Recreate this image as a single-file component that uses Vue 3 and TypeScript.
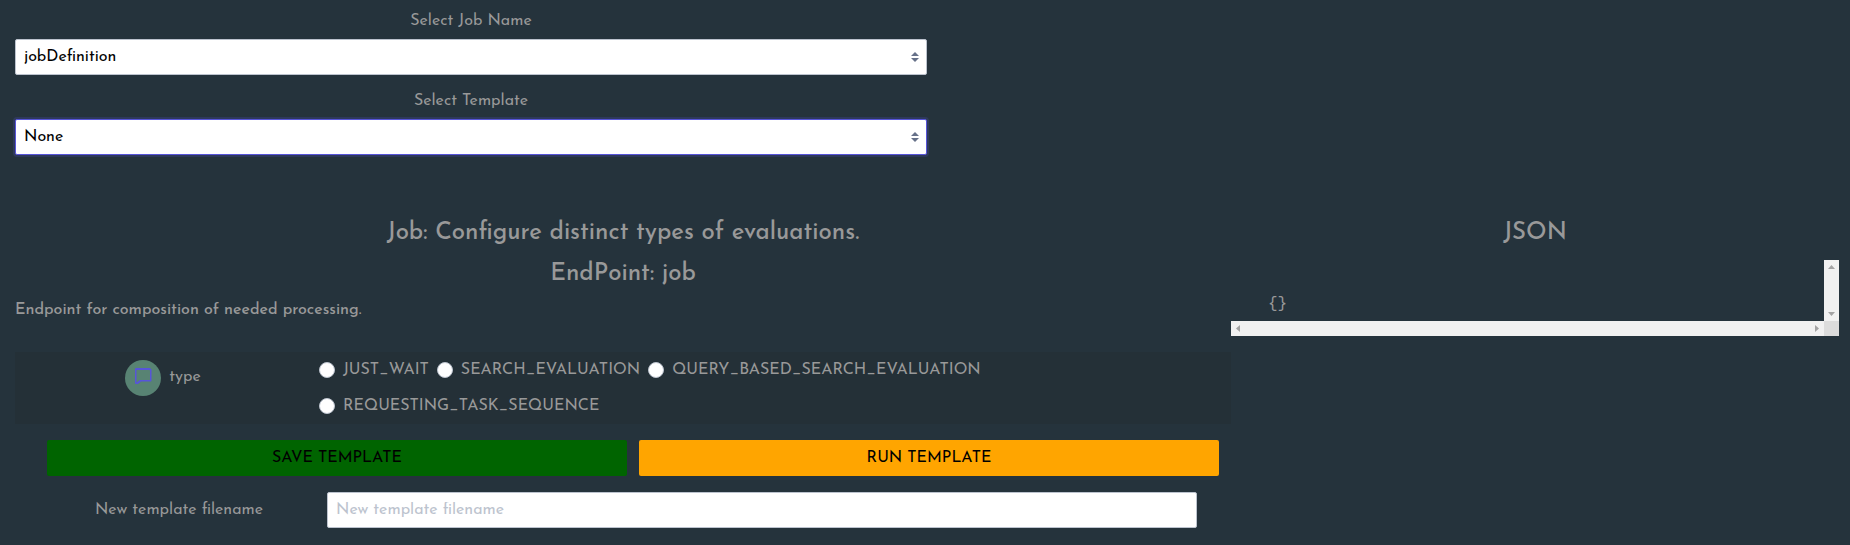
<script setup lang="ts">
import { ref } from 'vue'

const jobName = ref('jobDefinition')
const template = ref('None')
const evaluationType = ref('')
const filename = ref('')
const json = ref('{}')

const jobNames: string[] = ['jobDefinition']
const templates: string[] = ['None']
const evaluationTypes: string[] = [
  'JUST_WAIT',
  'SEARCH_EVALUATION',
  'QUERY_BASED_SEARCH_EVALUATION',
  'REQUESTING_TASK_SEQUENCE',
]
</script>

<template>
  <main class="page">
    <section class="selectors">
      <label class="field-label" for="job-name">Select Job Name</label>
      <select id="job-name" v-model="jobName" class="control select">
        <option v-for="name in jobNames" :key="name">{{ name }}</option>
      </select>
      <label class="field-label" for="template">Select Template</label>
      <select id="template" v-model="template" class="control select active">
        <option v-for="name in templates" :key="name">{{ name }}</option>
      </select>
    </section>

    <div class="columns">
      <section class="job">
        <h3>Job: Configure distinct types of evaluations.</h3>
        <h3>EndPoint: job</h3>
        <p class="description">Endpoint for composition of needed processing.</p>

        <div class="type-row" role="radiogroup" aria-labelledby="type-label">
          <div class="type-name">
            <button class="info" type="button" aria-label="Show description">
              <svg viewBox="0 0 18 20" width="18" height="20" aria-hidden="true">
                <path
                  d="M2 0H16L17.5 1.5V12.5L17 13.5H7L4 16H2Q1 16 1 15V1Q1 0 2 0ZM2.5 2V14.5L6 12H16V2.5L15.5 2Z"
                  fill="#5755d9"
                  fill-rule="evenodd"
                />
              </svg>
            </button>
            <span id="type-label">type</span>
          </div>
          <div class="options">
            <label v-for="name in evaluationTypes" :key="name" class="option">
              <input v-model="evaluationType" type="radio" name="type" :value="name" />
              <span>{{ name }}</span>
            </label>
          </div>
        </div>

        <div class="actions">
          <button class="button save" type="button">SAVE TEMPLATE</button>
          <button class="button run" type="button">RUN TEMPLATE</button>
        </div>

        <div class="filename-row">
          <label for="filename">New template filename</label>
          <input id="filename" v-model="filename" class="control" type="text" placeholder="New template filename" />
        </div>
      </section>

      <section class="json">
        <h3>JSON</h3>
        <div class="viewer">
          <pre>{{ json }}</pre>
          <div class="bar vertical">
            <svg viewBox="0 0 7 4" width="7" height="4"><path d="M0 4L3.5 0L7 4Z" /></svg>
            <svg viewBox="0 0 7 4" width="7" height="4"><path d="M0 0L3.5 4L7 0Z" /></svg>
          </div>
          <div class="bar horizontal">
            <svg viewBox="0 0 4 7" width="4" height="7"><path d="M4 0L0 3.5L4 7Z" /></svg>
            <svg viewBox="0 0 4 7" width="4" height="7"><path d="M0 0L4 3.5L0 7Z" /></svg>
          </div>
          <div class="corner"></div>
        </div>
      </section>
    </div>
  </main>
</template>

<style>
body {
  background: #25333c;
}
</style>

<style scoped>
* {
  box-sizing: border-box;
}

.page {
  padding: 9px 11px 16px 15px;
  color: #999;
  font: 16px/24px "Josefin Sans", Lato, sans-serif;
}

.selectors {
  width: 50%;
  display: flex;
  flex-direction: column;
}

.field-label {
  text-align: center;
  margin-bottom: 6px;
}

.control {
  width: 100%;
  height: 36px;
  padding: 4px 8px;
  border: 1px solid #bcc3ce;
  border-radius: 2px;
  background: #fff;
  color: #000;
  font: inherit;
  outline: none;
}

.control::placeholder {
  color: #bcc3ce;
  opacity: 1;
}

.select {
  appearance: none;
  margin-bottom: 14px;
  background: #fff url("data:image/svg+xml;charset=utf8,%3Csvg xmlns='http://www.w3.org/2000/svg' viewBox='0 0 4 5'%3E%3Cpath fill='%23667189' d='M2 0L0 2h4zm0 5L0 3h4z'/%3E%3C/svg%3E") no-repeat right 7px center / 8px 10px;
}

.active,
.control:focus {
  border-color: #5755d9;
  box-shadow: 0 0 0 2px rgba(87, 85, 217, 0.2);
}

.columns {
  display: grid;
  grid-template-columns: 2fr 1fr;
  margin-top: 44px;
}

h3 {
  margin: 0;
  font-size: 24px;
  line-height: 41px;
  font-weight: 500;
  text-align: center;
}

.description {
  margin: 3px 0 30px;
  font-weight: 500;
}

.type-row {
  display: grid;
  grid-template-columns: 1fr 3fr;
  background: #243037;
}

.type-name {
  display: flex;
  align-items: center;
  align-self: start;
  justify-content: center;
  gap: 8px;
  padding: 8px 8px 0 0;
}

.type-name span {
  padding-bottom: 2px;
}

.info {
  display: flex;
  align-items: center;
  justify-content: center;
  width: 36px;
  height: 36px;
  padding: 0;
  border: 0;
  border-radius: 50%;
  background: #588373;
}

.options {
  display: flex;
  flex-wrap: wrap;
  column-gap: 8px;
}

.option {
  display: flex;
  align-items: center;
  gap: 8px;
  height: 36px;
}

.option input {
  appearance: none;
  width: 16px;
  height: 16px;
  margin: 0;
  border: 1px solid #bcc3ce;
  border-radius: 50%;
  background: #fff;
}

.option input:checked {
  border: 5px solid #5755d9;
}

.actions {
  display: grid;
  grid-template-columns: 1fr 1fr;
  gap: 12px;
  margin: 16px 12px 16px 32px;
}

.button {
  height: 36px;
  padding: 0;
  border: 0;
  border-radius: 2px;
  color: #000;
  font: inherit;
}

.save {
  background: #006400;
}

.run {
  background: #ffa500;
}

.filename-row {
  display: grid;
  grid-template-columns: 1fr 3fr;
  align-items: center;
  margin: 0 34px 0 22px;
}

.filename-row label {
  padding-right: 6px;
  text-align: center;
}

.viewer {
  display: grid;
  grid-template-columns: 1fr 15px;
  grid-template-rows: auto 15px;
  margin-top: 6px;
}

pre {
  margin: 0;
  padding: 32px 37px 5px;
  font: 16px/24px "Liberation Mono", monospace;
}

.bar {
  display: flex;
  align-items: center;
  justify-content: space-between;
  padding: 5px;
  background: #f1f1f1;
}

.bar path {
  fill: #a3a3a3;
}

.vertical {
  flex-direction: column;
}

.corner {
  background: #dcdcdc;
}
</style>
